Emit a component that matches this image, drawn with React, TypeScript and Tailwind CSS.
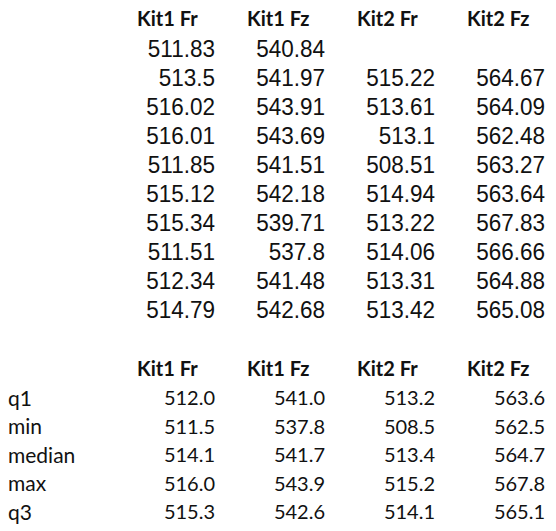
const headers = ["Kit1 Fr", "Kit1 Fz", "Kit2 Fr", "Kit2 Fz"];

const raw: (string | null)[][] = [
  ["511.83", "540.84", null, null],
  ["513.5", "541.97", "515.22", "564.67"],
  ["516.02", "543.91", "513.61", "564.09"],
  ["516.01", "543.69", "513.1", "562.48"],
  ["511.85", "541.51", "508.51", "563.27"],
  ["515.12", "542.18", "514.94", "563.64"],
  ["515.34", "539.71", "513.22", "567.83"],
  ["511.51", "537.8", "514.06", "566.66"],
  ["512.34", "541.48", "513.31", "564.88"],
  ["514.79", "542.68", "513.42", "565.08"],
];

const stats: [string, string[]][] = [
  ["q1", ["512.0", "541.0", "513.2", "563.6"]],
  ["min", ["511.5", "537.8", "508.5", "562.5"]],
  ["median", ["514.1", "541.7", "513.4", "564.7"]],
  ["max", ["516.0", "543.9", "515.2", "567.8"]],
  ["q3", ["515.3", "542.6", "514.1", "565.1"]],
];

const sans = "font-['Lato','Open_Sans',sans-serif]";
const arial = "font-['Liberation_Sans',Arial,sans-serif]";

function HeaderRow({ height }: { height: string }) {
  return (
    <div className={`grid grid-cols-[110px_repeat(4,110px)] ${height}`}>
      <div />
      {headers.map((h) => (
        <div key={h} className={`flex items-center pl-[27px] text-[20px] font-bold ${sans}`}>
          {h}
        </div>
      ))}
    </div>
  );
}

export default function App() {
  return (
    <div className="h-[531px] w-[556px] overflow-hidden bg-white pt-[3px] text-[#111]">
      {/* raw measurements */}
      <HeaderRow height="h-[29px]" />
      {raw.map((row, i) => (
        <div key={i} className="grid h-[29px] grid-cols-[110px_repeat(4,110px)]">
          <div />
          {row.map((v, j) => (
            <div key={j} className={`flex items-center justify-end pr-[5px] text-[22.5px] ${arial}`}>
              <span className="inline-block scale-y-[1.1]">{v}</span>
            </div>
          ))}
        </div>
      ))}

      {/* summary */}
      <div className="mt-[31px]">
        <HeaderRow height="h-[28.5px]" />
        {stats.map(([label, vals]) => (
          <div key={label} className={`grid h-[28.5px] grid-cols-[110px_repeat(4,110px)] text-[20px] ${sans}`}>
            <div className="flex items-center pl-[8px] text-[21px]">{label}</div>
            {vals.map((v, j) => (
              <div key={j} className="flex items-center justify-end pr-[5px]">
                {v}
              </div>
            ))}
          </div>
        ))}
      </div>
    </div>
  );
}
